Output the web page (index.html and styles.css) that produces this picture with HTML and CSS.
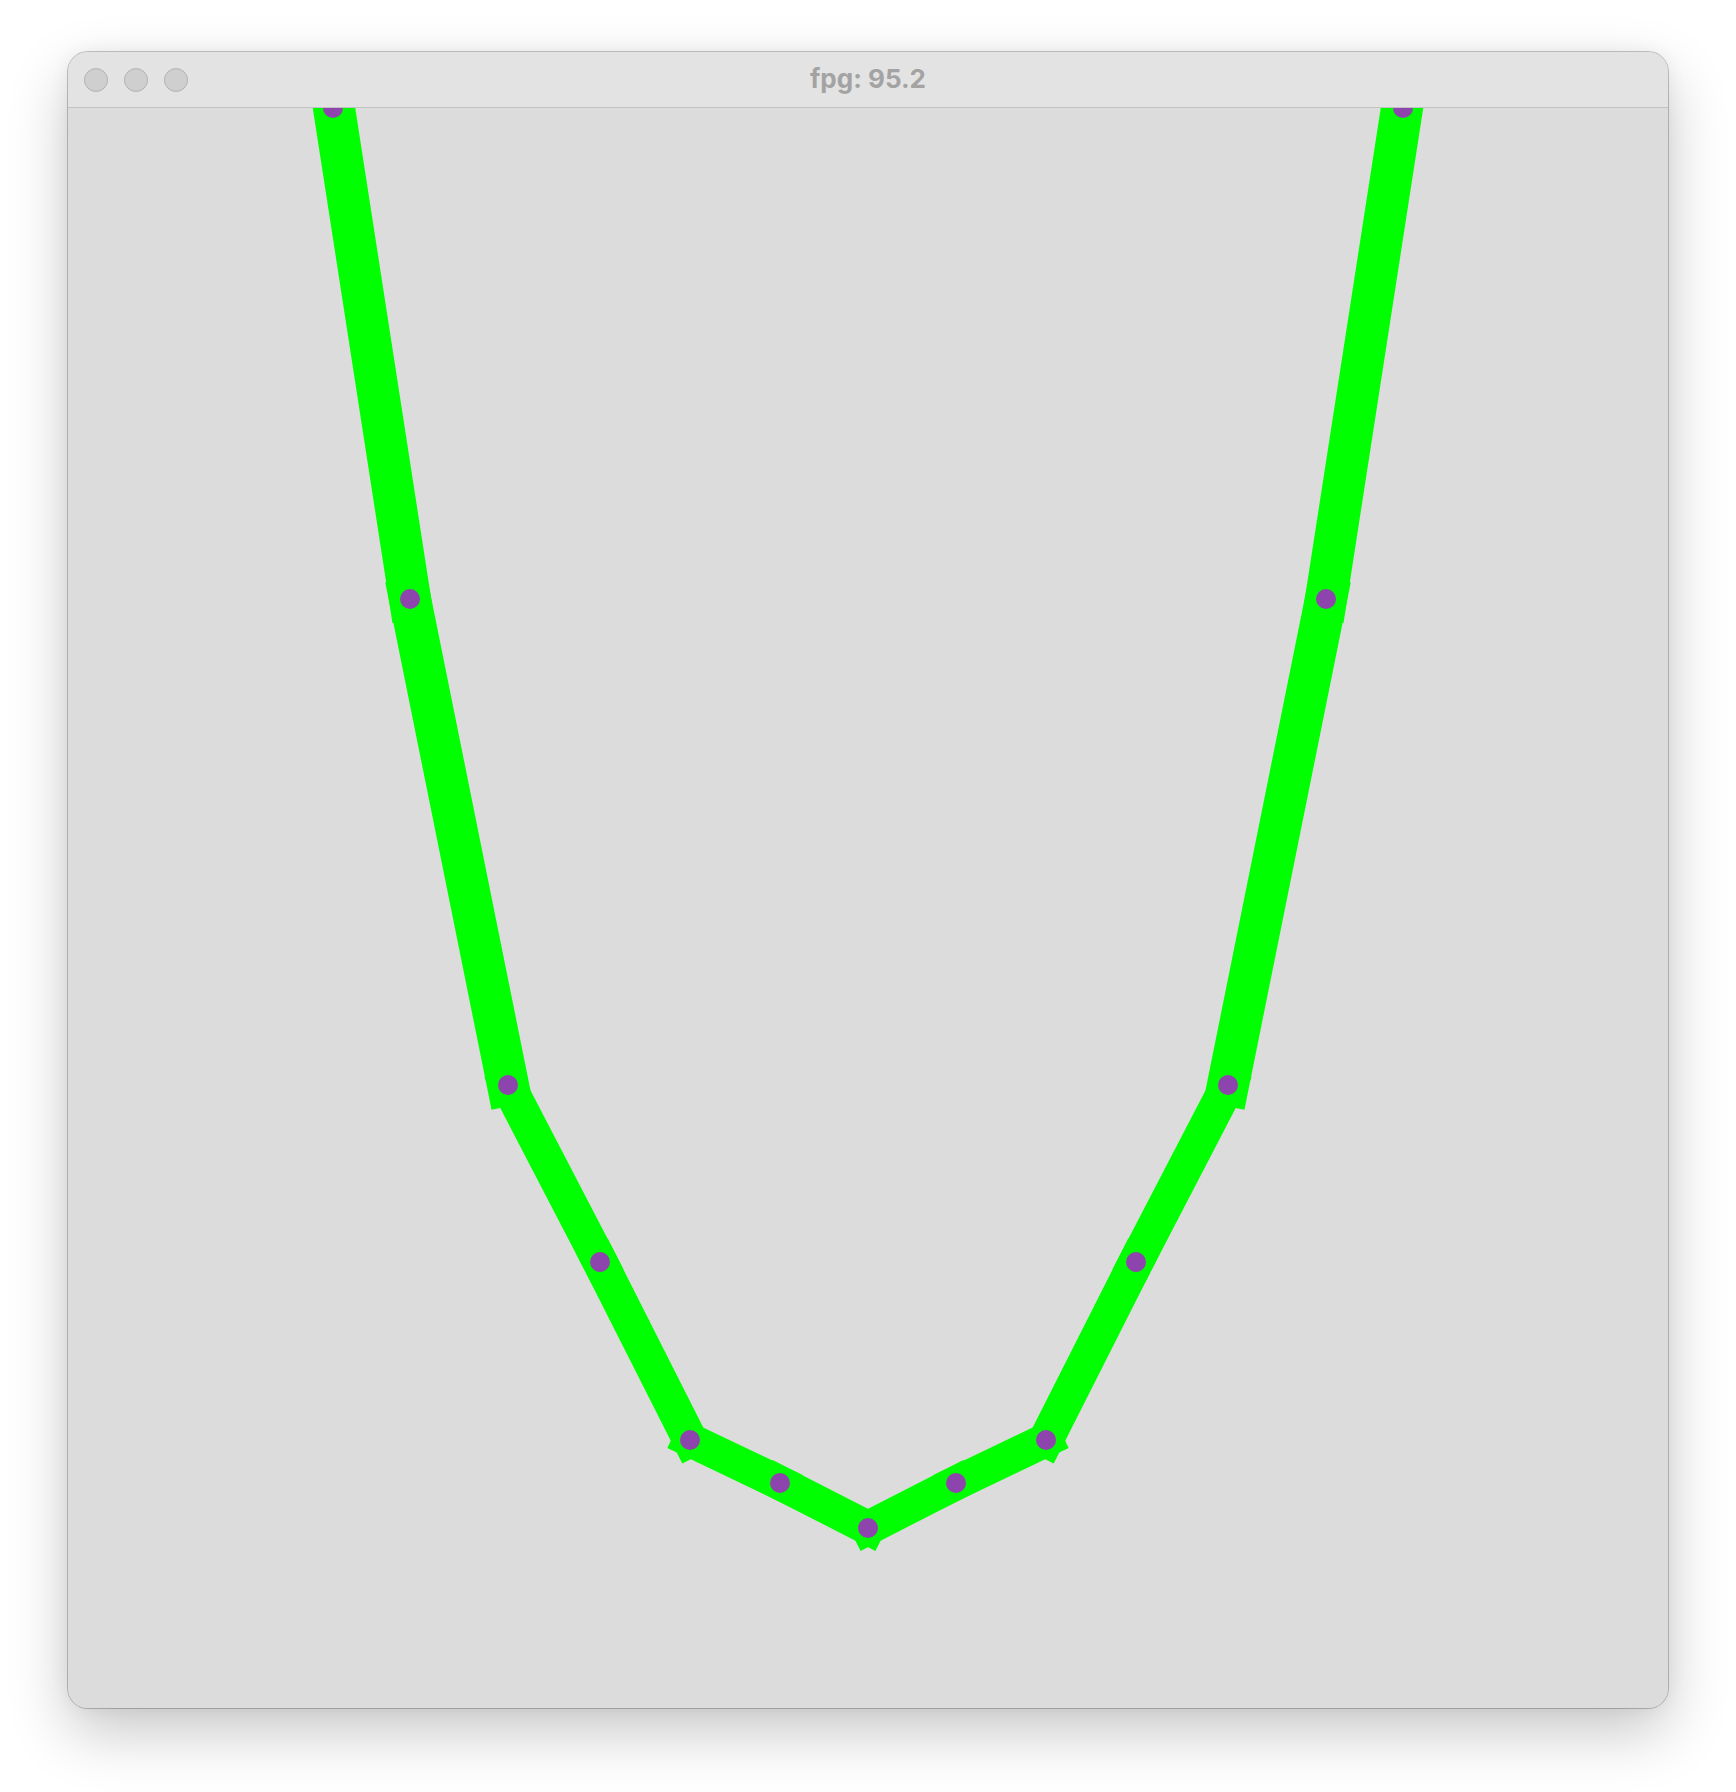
FILE: index.html
```html
<!DOCTYPE html>
<html>
<head>
<meta charset="utf-8">
<title>fpg</title>
<link rel="stylesheet" href="styles.css">
</head>
<body>
<div class="window">
  <div class="titlebar">
    <div class="lights">
      <span class="light"></span>
      <span class="light"></span>
      <span class="light"></span>
    </div>
    <div class="title">fpg: 95.2</div>
  </div>
  <div class="content">
    <svg class="plot" width="1600" height="1600" viewBox="0 0 1600 1600">
      <g class="seg" stroke="#00ff00" stroke-linecap="square" fill="none">
        <line x1="266" y1="0" x2="342" y2="491" stroke-width="42"/>
        <line x1="342" y1="491" x2="440" y2="977" stroke-width="42"/>
        <line x1="440" y1="977" x2="532" y2="1154" stroke-width="35"/>
        <line x1="532" y1="1154" x2="622" y2="1332" stroke-width="35"/>
        <line x1="622" y1="1332" x2="712" y2="1375" stroke-width="34"/>
        <line x1="712" y1="1375" x2="800" y2="1420" stroke-width="34"/>
        <line x1="800" y1="1420" x2="888" y2="1375" stroke-width="34"/>
        <line x1="888" y1="1375" x2="978" y2="1332" stroke-width="34"/>
        <line x1="978" y1="1332" x2="1068" y2="1154" stroke-width="35"/>
        <line x1="1068" y1="1154" x2="1160" y2="977" stroke-width="35"/>
        <line x1="1160" y1="977" x2="1258" y2="491" stroke-width="42"/>
        <line x1="1258" y1="491" x2="1334" y2="0" stroke-width="42"/>
      </g>
      <g class="dots" fill="#8e44ad">
        <circle cx="265" cy="0" r="10"/>
        <circle cx="342" cy="491" r="10"/>
        <circle cx="440" cy="977" r="10"/>
        <circle cx="532" cy="1154" r="10"/>
        <circle cx="622" cy="1332" r="10"/>
        <circle cx="712" cy="1375" r="10"/>
        <circle cx="800" cy="1420" r="10"/>
        <circle cx="888" cy="1375" r="10"/>
        <circle cx="978" cy="1332" r="10"/>
        <circle cx="1068" cy="1154" r="10"/>
        <circle cx="1160" cy="977" r="10"/>
        <circle cx="1258" cy="491" r="10"/>
        <circle cx="1335" cy="0" r="10"/>
      </g>
    </svg>
  </div>
</div>
</body>
</html>
```
FILE: styles.css
```css
html, body {
  margin: 0;
  padding: 0;
  background: #ffffff;
}

body {
  padding: 52px 0 0 68px;
  width: 1736px;
  height: 1792px;
  box-sizing: border-box;
  overflow: hidden;
}

.window {
  width: 1600px;
  height: 1656px;
  border-radius: 20px;
  overflow: hidden;
  background: #dcdcdc;
  box-shadow: 0 0 0 1px rgba(0, 0, 0, 0.22), 0 24px 60px rgba(0, 0, 0, 0.22), 0 0 20px rgba(0, 0, 0, 0.06);
  display: flex;
  flex-direction: column;
}

.titlebar {
  height: 55px;
  flex: 0 0 55px;
  background: #e3e3e3;
  border-bottom: 1px solid #c2c2c2;
  display: flex;
  align-items: center;
  position: relative;
}

.lights {
  display: flex;
  gap: 16px;
  padding-left: 16px;
  padding-top: 1px;
}

.light {
  width: 22px;
  height: 22px;
  border-radius: 50%;
  background: #cfcfcf;
  border: 1px solid #b2b2b2;
}

.title {
  position: absolute;
  left: 0;
  right: 0;
  top: 0;
  bottom: 0;
  display: flex;
  align-items: center;
  justify-content: center;
  font-family: Inter, "Liberation Sans", sans-serif;
  font-weight: 700;
  font-size: 26px;
  color: #a3a3a3;
  padding-bottom: 2px;
}

.content {
  width: 1600px;
  height: 1600px;
  flex: 0 0 1600px;
  background: #dcdcdc;
}

.plot {
  display: block;
}
```
